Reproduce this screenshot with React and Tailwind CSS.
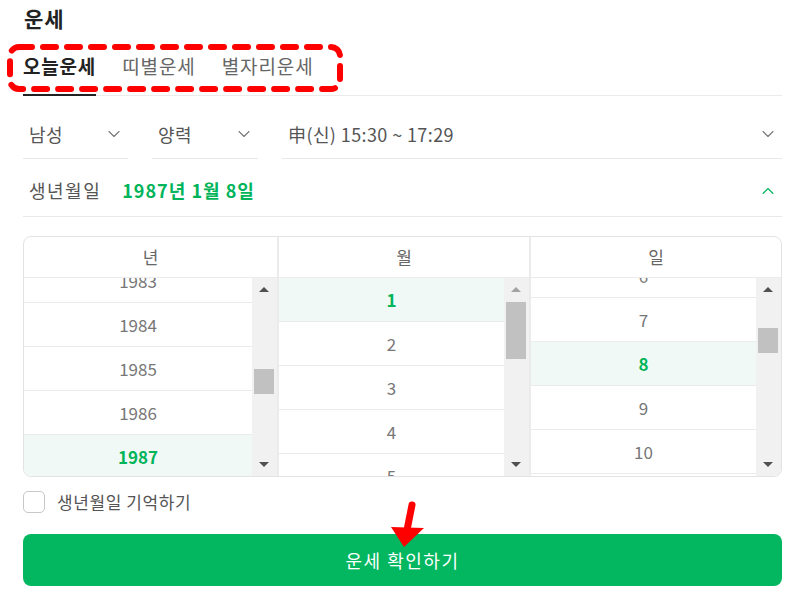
import { ChevronDown, ChevronUp } from 'lucide-react';

const columns = [
  {
    label: '년',
    offset: '-mt-[19px]',
    items: ['1983', '1984', '1985', '1986', '1987'],
    selected: '1987',
    thumb: 'top-[91px] h-[25px]',
    upDisabled: false,
  },
  {
    label: '월',
    offset: 'mt-0',
    items: ['1', '2', '3', '4', '5'],
    selected: '1',
    thumb: 'top-[24px] h-[57px]',
    upDisabled: true,
  },
  {
    label: '일',
    offset: '-mt-[24px]',
    items: ['6', '7', '8', '9', '10', '11'],
    selected: '8',
    thumb: 'top-[50px] h-[25px]',
    upDisabled: false,
  },
];

function Select({ label, className }) {
  return (
    <div className={`flex h-[49px] items-center justify-between border-b border-[#e8e8e8] pl-[6px] pr-[4px] ${className}`}>
      <span className="text-[18px] tracking-[0.4px] text-[#555]">{label}</span>
      <ChevronDown className="h-[20px] w-[20px] text-[#777]" strokeWidth={1.3} />
    </div>
  );
}

function Scrollbar({ thumb, upDisabled }) {
  return (
    <div className="relative w-[25px] shrink-0 bg-[#f1f1f1]">
      <div
        className={`absolute left-[7px] top-[9px] h-0 w-0 border-x-[5px] border-b-[5px] border-x-transparent ${
          upDisabled ? 'border-b-[#a3a3a3]' : 'border-b-[#505050]'
        }`}
      />
      <div className={`absolute left-[2px] w-[20px] bg-[#c1c1c1] ${thumb}`} />
      <div className="absolute bottom-[9px] left-[7px] h-0 w-0 border-x-[5px] border-t-[5px] border-x-transparent border-t-[#505050]" />
    </div>
  );
}

function Column({ col, last }) {
  return (
    <div className={`flex min-w-0 flex-col ${last ? '' : 'border-r-2 border-[#ebebeb]'}`}>
      <div className="flex h-[41px] items-center justify-center border-b border-[#ebebeb] text-[17px] text-[#666]">
        {col.label}
      </div>
      <div className="flex h-[198px] overflow-hidden">
        <div className="flex-1 overflow-hidden">
          <div className={col.offset}>
            {col.items.map((item) => {
              const active = item === col.selected;
              return (
                <div
                  key={item}
                  className={`flex h-[44px] items-center justify-center border-b border-[#ebebeb] text-[17px] ${
                    active ? 'bg-[#f1f9f6] font-bold text-[#00b45a]' : 'text-[#777]'
                  }`}
                >
                  {item}
                </div>
              );
            })}
          </div>
        </div>
        <Scrollbar thumb={col.thumb} upDisabled={col.upDisabled} />
      </div>
    </div>
  );
}

export default function App() {
  return (
    <div
      className="relative h-[594px] w-[805px] overflow-hidden bg-white px-[23px]"
      style={{ fontFamily: '"Noto Sans CJK KR", "Noto Sans", sans-serif' }}
    >
      {/* Title */}
      <div className="flex h-[38px] items-center pl-[1px] text-[21px] font-bold tracking-[1px] text-[#222]">운세</div>

      {/* Tabs */}
      <div className="flex gap-[26px] border-b border-[#ebebeb] pt-[15px]">
        <div className="-mb-px border-b-2 border-[#222] pb-[15px] text-[19px] font-bold leading-[26px] tracking-[0.8px] text-[#222]">
          오늘운세
        </div>
        <div className="pb-[15px] text-[19px] leading-[26px] tracking-[0.9px] text-[#666]">띠별운세</div>
        <div className="pb-[15px] text-[19px] leading-[26px] tracking-[0.9px] text-[#666]">별자리운세</div>
      </div>

      {/* Selects */}
      <div className="mt-[14px] flex gap-[24px]">
        <Select label="남성" className="w-[105px]" />
        <Select label="양력" className="w-[106px]" />
        <Select label="申(신) 15:30 ~ 17:29" className="flex-1" />
      </div>

      {/* Birth date */}
      <div className="flex h-[58px] items-center justify-between border-b border-[#e8e8e8] pl-[6px] pr-[4px] pt-[6px]">
        <div className="flex items-center gap-[21px]">
          <span className="text-[18px] tracking-[1.5px] text-[#555]">생년월일</span>
          <span className="text-[18px] font-bold tracking-[1px] text-[#00b45a]">1987년 1월 8일</span>
        </div>
        <ChevronUp className="h-[20px] w-[20px] text-[#00b45a]" strokeWidth={1.3} />
      </div>

      {/* Picker */}
      <div className="mt-[19px] grid grid-cols-[255px_252px_1fr] overflow-hidden rounded-[8px] border border-[#e3e3e3]">
        {columns.map((col, i) => (
          <Column key={col.label} col={col} last={i === columns.length - 1} />
        ))}
      </div>

      {/* Remember */}
      <label className="mt-[13px] flex h-[24px] items-center gap-[12px]">
        <span className="h-[22px] w-[22px] rounded-[5px] border border-[#c8c8c8] bg-white" />
        <span className="text-[17px] tracking-[0.6px] text-[#555]">생년월일 기억하기</span>
      </label>

      {/* Submit */}
      <button className="mt-[20px] flex h-[52px] w-full items-center justify-center rounded-[8px] bg-[#02b75f] text-[18px] tracking-[1.5px] text-white">
        운세 확인하기
      </button>

      {/* Annotation: dashed box around tabs */}
      <svg className="pointer-events-none absolute left-0 top-0" width="360" height="100">
        <rect
          x="10"
          y="47"
          width="330"
          height="42"
          rx="9"
          fill="none"
          stroke="#ff0000"
          strokeWidth="6"
          strokeDasharray="13 11"
          strokeLinecap="round"
        />
      </svg>

      {/* Annotation: arrow to button */}
      <svg className="pointer-events-none absolute left-[385px] top-[498px]" width="50" height="55">
        <path d="M27 7 L22 32" stroke="#ff0000" strokeWidth="7" strokeLinecap="round" />
        <polygon points="6,29 39,30 19,49" fill="#ff0000" />
      </svg>
    </div>
  );
}
